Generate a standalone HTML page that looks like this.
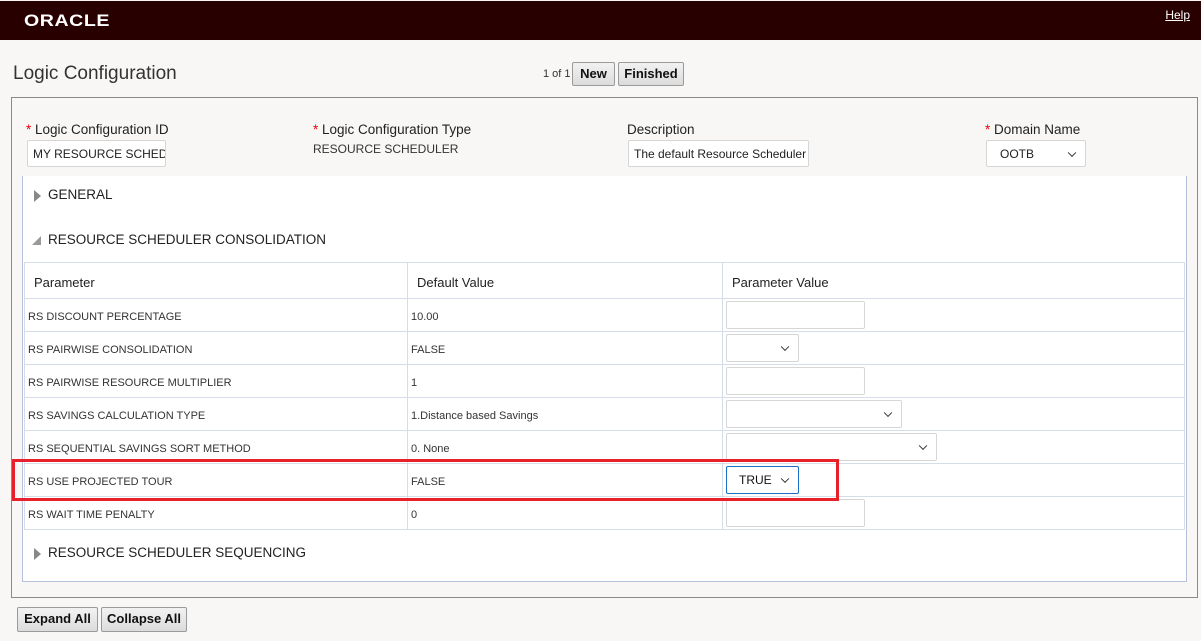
<!DOCTYPE html>
<html><head><meta charset="utf-8"><style>
*{box-sizing:border-box;margin:0;padding:0}
body{width:1201px;height:641px;background:#f8f7f5;font-family:"Liberation Sans",sans-serif;color:#222;position:relative;overflow:hidden}
.a{position:absolute}
.hdr{left:0;top:1px;width:1201px;height:39px;background:#290000}
.logo{left:24px;top:11px;color:#fff;font-size:17px;font-weight:bold;letter-spacing:0.5px;transform:scaleX(1.15);transform-origin:left}
.help{right:11px;top:8px;color:#fff;font-size:12px;text-decoration:underline}
.title{left:13px;top:63px;font-size:19px;color:#333}
.btn{background:linear-gradient(#f2f2f2,#dcdcdc);border:1px solid #9a9a9a;border-radius:2px;font-size:13px;font-weight:bold;color:#111;text-align:center;line-height:22px}
.outer{left:11px;top:97px;width:1187px;height:501px;border:1px solid #8a8a8a}
.lbl{font-size:13.5px;color:#222}
.lbl b{color:#e00;font-weight:normal}
.inp{background:#fff;border:1px solid #d6d6d6;border-radius:2px;font-size:12px;line-height:26px;padding-left:5px;white-space:nowrap;overflow:hidden}
.panel{left:22px;top:176px;width:1165px;height:406px;background:#fff;border-left:1px solid #b6bfdc;border-right:1px solid #b6bfdc;border-bottom:1px solid #b6bfdc}
.sec{font-size:13.5px;color:#222}
.tri{width:0;height:0;border-top:6px solid transparent;border-bottom:6px solid transparent;border-left:7px solid #888}
table{position:absolute;left:24px;top:262px;width:1161px;border-collapse:collapse}
td{border:1px solid #d6dde8;height:33px;font-size:11px;padding-left:3px;padding-top:3px;color:#333;vertical-align:middle}
th{border:1px solid #d6dde8;height:36px;font-size:13px;font-weight:normal;text-align:left;padding-left:9px;padding-top:3px;color:#222}
.sel:after{content:"";position:absolute;right:10px;top:50%;width:5px;height:5px;border-right:1.6px solid #333;border-bottom:1.6px solid #333;transform:translateY(-70%) rotate(45deg)}
</style></head><body>
<div class="a hdr"></div>
<div class="a logo">ORACLE</div>
<div class="a help">Help</div>
<div class="a title">Logic Configuration</div>
<div class="a" style="left:543px;top:68px;font-size:11px;color:#333">1 of 1</div>
<div class="a btn" style="left:572px;top:62px;width:43px;height:24px">New</div>
<div class="a btn" style="left:618px;top:62px;width:66px;height:24px">Finished</div>
<div class="a outer"></div>
<div class="a lbl" style="left:26px;top:122px"><b>*</b> Logic Configuration ID</div>
<div class="a inp" style="left:27px;top:140px;width:139px;height:27px">MY RESOURCE SCHEDULER</div>
<div class="a lbl" style="left:313px;top:122px"><b>*</b> Logic Configuration Type</div>
<div class="a" style="left:313px;top:142px;font-size:12px;color:#333">RESOURCE SCHEDULER</div>
<div class="a lbl" style="left:627px;top:122px">Description</div>
<div class="a inp" style="left:628px;top:140px;width:181px;height:27px">The default Resource Scheduler</div>
<div class="a lbl" style="left:985px;top:122px"><b>*</b> Domain Name</div>
<div class="a inp sel" style="left:986px;top:140px;width:100px;height:27px;padding-left:13px">OOTB</div>
<div class="a panel"></div>
<div class="a tri" style="left:34px;top:190px"></div>
<div class="a sec" style="left:48px;top:187px">GENERAL</div>
<div class="a" style="left:32px;top:236px;width:0;height:0;border-left:9px solid transparent;border-bottom:9px solid #999"></div>
<div class="a sec" style="left:48px;top:232px">RESOURCE SCHEDULER CONSOLIDATION</div>
<table>
<tr><th style="width:383px">Parameter</th><th style="width:315px">Default Value</th><th>Parameter Value</th></tr>
<tr><td>RS DISCOUNT PERCENTAGE</td><td>10.00</td><td></td></tr>
<tr><td>RS PAIRWISE CONSOLIDATION</td><td>FALSE</td><td></td></tr>
<tr><td>RS PAIRWISE RESOURCE MULTIPLIER</td><td>1</td><td></td></tr>
<tr><td>RS SAVINGS CALCULATION TYPE</td><td>1.Distance based Savings</td><td></td></tr>
<tr><td>RS SEQUENTIAL SAVINGS SORT METHOD</td><td>0. None</td><td></td></tr>
<tr><td>RS USE PROJECTED TOUR</td><td>FALSE</td><td></td></tr>
<tr><td>RS WAIT TIME PENALTY</td><td>0</td><td></td></tr>
</table>
<div class="a inp" style="left:726px;top:301px;width:139px;height:28px"></div>
<div class="a inp sel" style="left:726px;top:334px;width:73px;height:28px"></div>
<div class="a inp" style="left:726px;top:367px;width:139px;height:28px"></div>
<div class="a inp sel" style="left:726px;top:400px;width:176px;height:28px"></div>
<div class="a inp sel" style="left:726px;top:433px;width:211px;height:28px"></div>
<div class="a inp sel" style="left:726px;top:466px;width:73px;height:28px;border-color:#1a6fc9;padding-left:12px;font-size:12px;color:#111">TRUE</div>
<div class="a inp" style="left:726px;top:499px;width:139px;height:28px"></div>
<div class="a" style="left:12px;top:459px;width:827px;height:42px;border:3.5px solid #e8202a"></div>
<div class="a tri" style="left:34px;top:548px"></div>
<div class="a sec" style="left:48px;top:545px">RESOURCE SCHEDULER SEQUENCING</div>
<div class="a btn" style="left:17px;top:607px;width:81px;height:25px">Expand All</div>
<div class="a btn" style="left:101px;top:607px;width:86px;height:25px">Collapse All</div>
</body></html>
